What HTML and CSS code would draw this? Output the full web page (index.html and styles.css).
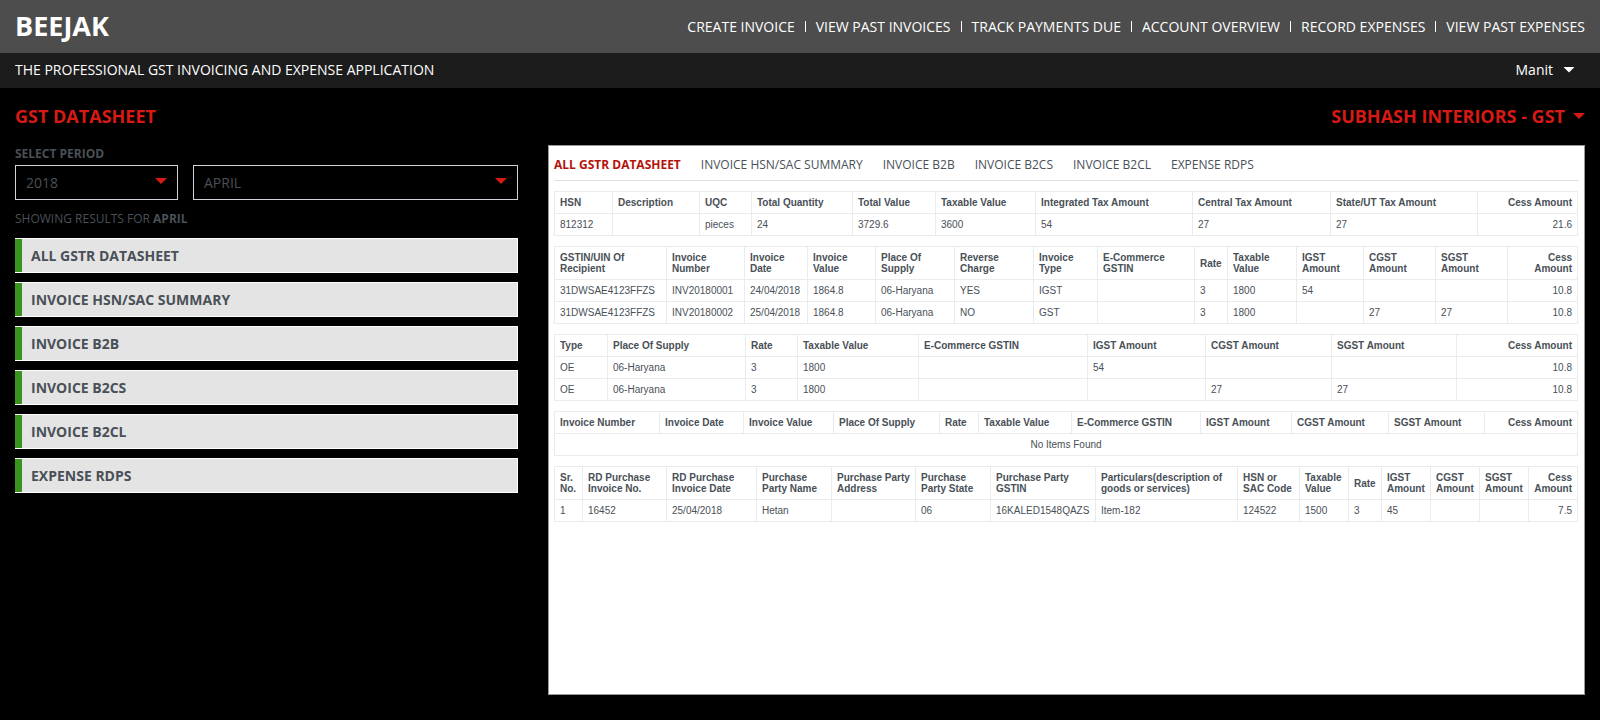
FILE: index.html
```html
<!DOCTYPE html>
<html lang="en">
<head>
<meta charset="utf-8">
<title>Beejak - GST Datasheet</title>
<link rel="stylesheet" href="styles.css">
</head>
<body>
<header class="topbar">
  <a class="brand" href="#">BEEJAK</a>
  <nav class="main-nav">
    <a href="#">CREATE INVOICE</a>
    <a href="#">VIEW PAST INVOICES</a>
    <a href="#">TRACK PAYMENTS DUE</a>
    <a href="#">ACCOUNT OVERVIEW</a>
    <a href="#">RECORD EXPENSES</a>
    <a href="#">VIEW PAST EXPENSES</a>
  </nav>
</header>
<div class="subbar">
  <span>THE PROFESSIONAL GST INVOICING AND EXPENSE APPLICATION</span>
  <button class="user-menu" type="button">Manit <span class="caret"></span></button>
</div>
<main class="page">
  <div class="page-head">
    <h1>GST DATASHEET</h1>
    <button class="company" type="button">SUBHASH INTERIORS - GST <span class="caret"></span></button>
  </div>
  <div class="columns">
    <aside class="sidebar">
      <label class="period-label" for="year">SELECT PERIOD</label>
      <div class="period">
        <div class="select-box"><select id="year"><option>2018</option></select><span class="caret"></span></div>
        <div class="select-box"><select id="month" aria-label="Month"><option>APRIL</option></select><span class="caret"></span></div>
      </div>
      <p class="showing">SHOWING RESULTS FOR <b>APRIL</b></p>
      <div class="sheet-list">
        <button type="button">ALL GSTR DATASHEET</button>
        <button type="button">INVOICE HSN/SAC SUMMARY</button>
        <button type="button">INVOICE B2B</button>
        <button type="button">INVOICE B2CS</button>
        <button type="button">INVOICE B2CL</button>
        <button type="button">EXPENSE RDPS</button>
      </div>
    </aside>
    <section class="panel">
      <nav class="tabs">
        <a class="active" href="#">ALL GSTR DATASHEET</a>
        <a href="#">INVOICE HSN/SAC SUMMARY</a>
        <a href="#">INVOICE B2B</a>
        <a href="#">INVOICE B2CS</a>
        <a href="#">INVOICE B2CL</a>
        <a href="#">EXPENSE RDPS</a>
      </nav>
      <div class="tables">
        <table class="hsn">
          <thead><tr><th>HSN</th><th>Description</th><th>UQC</th><th>Total Quantity</th><th>Total Value</th><th>Taxable Value</th><th>Integrated Tax Amount</th><th>Central Tax Amount</th><th>State/UT Tax Amount</th><th>Cess Amount</th></tr></thead>
          <tbody><tr><td>812312</td><td></td><td>pieces</td><td>24</td><td>3729.6</td><td>3600</td><td>54</td><td>27</td><td>27</td><td>21.6</td></tr></tbody>
        </table>
        <table class="b2b">
          <thead><tr><th>GSTIN/UIN Of Recipient</th><th>Invoice Number</th><th>Invoice Date</th><th>Invoice Value</th><th>Place Of Supply</th><th>Reverse Charge</th><th>Invoice Type</th><th>E-Commerce GSTIN</th><th>Rate</th><th>Taxable Value</th><th>IGST Amount</th><th>CGST Amount</th><th>SGST Amount</th><th>Cess Amount</th></tr></thead>
          <tbody>
            <tr><td>31DWSAE4123FFZS</td><td>INV20180001</td><td>24/04/2018</td><td>1864.8</td><td>06-Haryana</td><td>YES</td><td>IGST</td><td></td><td>3</td><td>1800</td><td>54</td><td></td><td></td><td>10.8</td></tr>
            <tr><td>31DWSAE4123FFZS</td><td>INV20180002</td><td>25/04/2018</td><td>1864.8</td><td>06-Haryana</td><td>NO</td><td>GST</td><td></td><td>3</td><td>1800</td><td></td><td>27</td><td>27</td><td>10.8</td></tr>
          </tbody>
        </table>
        <table class="b2cs">
          <thead><tr><th>Type</th><th>Place Of Supply</th><th>Rate</th><th>Taxable Value</th><th>E-Commerce GSTIN</th><th>IGST Amount</th><th>CGST Amount</th><th>SGST Amount</th><th>Cess Amount</th></tr></thead>
          <tbody>
            <tr><td>OE</td><td>06-Haryana</td><td>3</td><td>1800</td><td></td><td>54</td><td></td><td></td><td>10.8</td></tr>
            <tr><td>OE</td><td>06-Haryana</td><td>3</td><td>1800</td><td></td><td></td><td>27</td><td>27</td><td>10.8</td></tr>
          </tbody>
        </table>
        <table class="b2cl">
          <thead><tr><th>Invoice Number</th><th>Invoice Date</th><th>Invoice Value</th><th>Place Of Supply</th><th>Rate</th><th>Taxable Value</th><th>E-Commerce GSTIN</th><th>IGST Amount</th><th>CGST Amount</th><th>SGST Amount</th><th>Cess Amount</th></tr></thead>
          <tbody><tr><td class="empty" colspan="11">No Items Found</td></tr></tbody>
        </table>
        <table class="rdps">
          <thead><tr><th>Sr. No.</th><th>RD Purchase Invoice No.</th><th>RD Purchase Invoice Date</th><th>Purchase Party Name</th><th>Purchase Party Address</th><th>Purchase Party State</th><th>Purchase Party GSTIN</th><th>Particulars(description of goods or services)</th><th>HSN or SAC Code</th><th>Taxable Value</th><th>Rate</th><th>IGST Amount</th><th>CGST Amount</th><th>SGST Amount</th><th>Cess Amount</th></tr></thead>
          <tbody><tr><td>1</td><td>16452</td><td>25/04/2018</td><td>Hetan</td><td></td><td>06</td><td>16KALED1548QAZS</td><td>Item-182</td><td>124522</td><td>1500</td><td>3</td><td>45</td><td></td><td></td><td>7.5</td></tr></tbody>
        </table>
      </div>
    </section>
  </div>
</main>
</body>
</html>
```
FILE: styles.css
```css
* { box-sizing: border-box; }

body {
  margin: 0;
  background: #000;
  color: #495057;
  font-family: "Open Sans", sans-serif;
  font-size: 14px;
}

a { color: inherit; text-decoration: none; }

button {
  border: 0;
  padding: 0;
  background: none;
  color: inherit;
  font: inherit;
  cursor: pointer;
}

.caret {
  width: 12px;
  height: 6px;
  background: currentColor;
  clip-path: polygon(0 0, 100% 0, 50% 100%);
}

/* Header bars */
.topbar, .subbar, .page-head {
  display: flex;
  align-items: center;
  justify-content: space-between;
  padding: 0 15px;
}

.topbar { height: 53px; background: #4d4d4d; color: #fff; }
.brand { padding-bottom: 2px; font-size: 27px; font-weight: 700; line-height: 36px; }

.main-nav { display: flex; line-height: 11px; }
.main-nav a { padding: 0 10px; }
.main-nav a + a { border-left: 1px solid #fff; }
.main-nav a:last-child { padding-right: 0; }

.subbar { height: 35px; padding-bottom: 2px; background: #1c1c1c; color: #fff; line-height: 19px; }
.user-menu { display: flex; align-items: center; gap: 10px; padding-right: 10px; }

/* Page */
.page-head { padding: 16px 0 17px; color: #d71a14; line-height: 24px; }
.page-head h1 { margin: 0; font-size: 18px; }
.company { display: flex; align-items: center; gap: 8px; font-size: 18px; font-weight: 700; }

.page { padding: 0 15px 24px; }
.columns { display: grid; grid-template-columns: 503fr 1037fr; gap: 30px; }

/* Sidebar */
.period-label { display: block; font-size: 12px; font-weight: 700; line-height: 18px; padding-bottom: 2px; }
.period { display: grid; grid-template-columns: 163fr 325fr; gap: 15px; }
.select-box { position: relative; }
.select-box select {
  display: block;
  width: 100%;
  height: 35px;
  padding: 0 10px;
  border: 1px solid #ced4da;
  border-radius: 0;
  appearance: none;
  background: #000;
  color: #495057;
  font: 400 14px "Open Sans", sans-serif;
}
.select-box .caret { position: absolute; right: 11px; top: 13px; color: #d71a14; pointer-events: none; }
.showing { margin: 9px 0 10px; font-size: 12px; line-height: 19px; }

.sheet-list { display: grid; gap: 9px; }
.sheet-list button {
  height: 35px;
  padding-left: 16px;
  border: 1px solid #fff;
  border-left: 0;
  background: linear-gradient(to right, #38941f 7px, #e4e4e4 7px);
  font-size: 14px;
  font-weight: 700;
  text-align: left;
}

/* Datasheet panel */
.panel { min-height: 550px; padding: 0 5px; border: 1px solid #999; background: #fff; }
.tabs {
  display: flex;
  gap: 20px;
  padding: 10px 0 6px;
  border-bottom: 1px solid #dee2e6;
  font-size: 12px;
  line-height: 18px;
}
.tabs .active { color: #b5120c; font-weight: 700; }

.tables { display: grid; gap: 10px; padding: 10px 1px 10px 0; }
table {
  width: 100%;
  border-collapse: collapse;
  table-layout: fixed;
  font-family: "Liberation Sans", Arial, sans-serif;
  font-size: 10px;
  line-height: 11px;
}
th, td { padding: 5px 0 5px 5px; border: 1px solid #e9ecef; text-align: left; }
td { height: 22px; }
th:last-child, td:last-child { padding-right: 5px; text-align: right; }
td.empty { text-align: center; }

.hsn th:nth-child(1) { width: 58px; }
.hsn th:nth-child(2) { width: 87px; }
.hsn th:nth-child(3) { width: 52px; }
.hsn th:nth-child(4) { width: 101px; }
.hsn th:nth-child(5) { width: 83px; }
.hsn th:nth-child(6) { width: 100px; }
.hsn th:nth-child(7) { width: 157px; }
.hsn th:nth-child(8) { width: 138px; }
.hsn th:nth-child(9) { width: 147px; }
.hsn th:nth-child(10) { width: 100px; }

.b2b th:nth-child(1) { width: 112px; padding-right: 20px; }
.b2b th:nth-child(2) { width: 78px; padding-right: 20px; }
.b2b th:nth-child(3) { width: 63px; }
.b2b th:nth-child(4) { width: 68px; }
.b2b th:nth-child(5) { width: 79px; padding-right: 20px; }
.b2b th:nth-child(6) { width: 79px; }
.b2b th:nth-child(7) { width: 64px; }
.b2b th:nth-child(8) { width: 97px; padding-right: 20px; }
.b2b th:nth-child(9) { width: 33px; }
.b2b th:nth-child(10) { width: 69px; }
.b2b th:nth-child(11) { width: 67px; }
.b2b th:nth-child(12) { width: 72px; }
.b2b th:nth-child(13) { width: 72px; }
.b2b th:nth-child(14) { width: 70px; }

.b2cs th:nth-child(1) { width: 53px; }
.b2cs th:nth-child(2) { width: 138px; }
.b2cs th:nth-child(3) { width: 52px; }
.b2cs th:nth-child(4) { width: 121px; }
.b2cs th:nth-child(5) { width: 169px; }
.b2cs th:nth-child(6) { width: 118px; }
.b2cs th:nth-child(7) { width: 126px; }
.b2cs th:nth-child(8) { width: 125px; }
.b2cs th:nth-child(9) { width: 121px; }

.b2cl th:nth-child(1) { width: 105px; }
.b2cl th:nth-child(2) { width: 84px; }
.b2cl th:nth-child(3) { width: 90px; }
.b2cl th:nth-child(4) { width: 106px; }
.b2cl th:nth-child(5) { width: 39px; }
.b2cl th:nth-child(6) { width: 93px; }
.b2cl th:nth-child(7) { width: 129px; }
.b2cl th:nth-child(8) { width: 91px; }
.b2cl th:nth-child(9) { width: 97px; }
.b2cl th:nth-child(10) { width: 96px; }
.b2cl th:nth-child(11) { width: 93px; }

.rdps th:nth-child(1) { width: 28px; }
.rdps th:nth-child(2) { width: 84px; }
.rdps th:nth-child(3) { width: 90px; }
.rdps th:nth-child(4) { width: 75px; }
.rdps th:nth-child(5) { width: 84px; }
.rdps th:nth-child(6) { width: 75px; }
.rdps th:nth-child(7) { width: 105px; }
.rdps th:nth-child(8) { width: 142px; }
.rdps th:nth-child(9) { width: 62px; }
.rdps th:nth-child(10) { width: 49px; }
.rdps th:nth-child(11) { width: 33px; }
.rdps th:nth-child(12) { width: 49px; }
.rdps th:nth-child(13) { width: 49px; }
.rdps th:nth-child(14) { width: 49px; }
.rdps th:nth-child(15) { width: 49px; }
```
